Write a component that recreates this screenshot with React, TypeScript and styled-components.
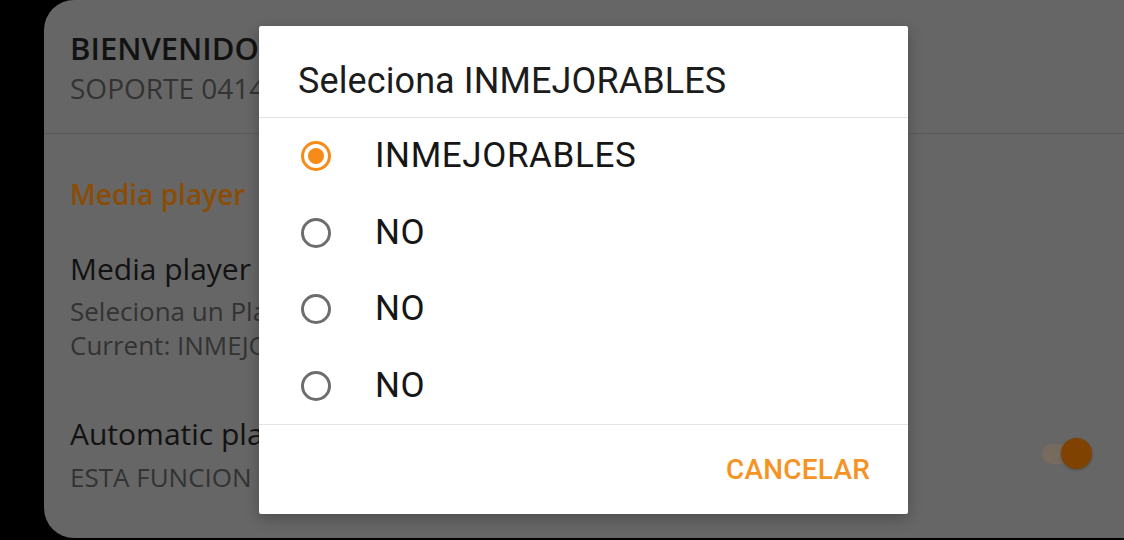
import React from "react";
import styled, { createGlobalStyle } from "styled-components";

const Global = createGlobalStyle`
  html, body { margin: 0; padding: 0; background: #000; }
  body { font-family: "Open Sans", "Noto Sans", sans-serif; }
`;

const Screen = styled.div`
  width: 1124px;
  height: 540px;
  display: flex;
  padding-left: 44px;
  box-sizing: border-box;
  overflow: hidden;
  position: relative;
`;

const Panel = styled.div`
  flex: 1;
  height: 538px;
  background: #666666;
  border-radius: 30px 0 0 30px;
  display: flex;
  flex-direction: column;
  overflow: hidden;
`;

const Header = styled.div`
  padding: 28px 32px 26px 26px;
  border-bottom: 1px solid #595959;
  display: flex;
  flex-direction: column;
`;

const Line = styled.div<{ $size: number; $lh: number; $color: string; $weight?: number; $mt?: number }>`
  font-family: "Open Sans", "Noto Sans", sans-serif;
  font-size: ${(p) => p.$size}px;
  line-height: ${(p) => p.$lh}px;
  color: ${(p) => p.$color};
  font-weight: ${(p) => p.$weight ?? 400};
  margin-top: ${(p) => p.$mt ?? 0}px;
  white-space: nowrap;
  overflow: hidden;
  max-width: 189px;
`;

const Category = styled.div`
  padding: 41px 26px 0 26px;
`;

const PrefRow = styled.div<{ $mt: number }>`
  display: flex;
  align-items: center;
  justify-content: space-between;
  padding: 0 32px 0 26px;
  margin-top: ${(p) => p.$mt}px;
`;

const PrefText = styled.div`
  display: flex;
  flex-direction: column;
`;

const Toggle = styled.div`
  position: relative;
  width: 50px;
  height: 32px;
  display: flex;
  align-items: center;
`;

const Track = styled.div`
  width: 44px;
  height: 20px;
  border-radius: 10px;
  background: #776a5e;
`;

const Thumb = styled.div`
  position: absolute;
  right: 0;
  top: 0;
  width: 31px;
  height: 31px;
  border-radius: 50%;
  background: #7f4200;
  box-shadow: 0 1px 3px rgba(0, 0, 0, 0.25);
`;

const Dialog = styled.div`
  position: absolute;
  top: 26px;
  left: 259px;
  width: 649px;
  height: 488px;
  background: #ffffff;
  border-radius: 2px;
  box-shadow: 0 4px 14px rgba(0, 0, 0, 0.25);
  display: flex;
  flex-direction: column;
  font-family: Roboto, "Noto Sans", sans-serif;
`;

const DialogTitle = styled.div`
  padding: 33px 39px 14px 39px;
  font-size: 36px;
  line-height: 44px;
  color: #1c1c1c;
  letter-spacing: 0.1px;
  border-bottom: 1px solid #e3e3e3;
`;

const Options = styled.div`
  display: flex;
  flex-direction: column;
  border-bottom: 1px solid #e3e3e3;
`;

const Option = styled.div`
  height: 76.5px;
  display: flex;
  align-items: center;
  padding-left: 42px;
  gap: 44px;
`;

const Radio = styled.div<{ $checked?: boolean }>`
  width: 30px;
  height: 30px;
  box-sizing: border-box;
  border-radius: 50%;
  border: 3px solid ${(p) => (p.$checked ? "#f78b17" : "#6d6d6d")};
  display: flex;
  align-items: center;
  justify-content: center;
  flex-shrink: 0;
  &::after {
    content: "";
    display: ${(p) => (p.$checked ? "block" : "none")};
    width: 16px;
    height: 16px;
    border-radius: 50%;
    background: #f78b17;
  }
`;

const OptionLabel = styled.span`
  font-size: 35px;
  line-height: 44px;
  font-weight: 400;
  letter-spacing: 0.6px;
  color: #161616;
`;

const Actions = styled.div`
  flex: 1;
  display: flex;
  align-items: center;
  justify-content: flex-end;
  padding-right: 38px;
`;

const ActionButton = styled.button`
  background: none;
  border: none;
  padding: 0;
  font-family: Roboto, "Noto Sans", sans-serif;
  font-size: 28px;
  font-weight: 500;
  color: #f59324;
  letter-spacing: 0.2px;
  cursor: pointer;
`;

const options = ["INMEJORABLES", "NO", "NO", "NO"];

export default function App() {
  return (
    <>
      <Global />
      <Screen>
        <Panel>
          <Header>
            <Line $size={31} $lh={40} $color="#121212" $weight={600}>
              BIENVENIDO A INMEJORABLES
            </Line>
            <Line $size={28} $lh={38} $color="#333333" $weight={500} $mt={1}>
              SOPORTE 04141234567
            </Line>
          </Header>
          <Category>
            <Line $size={28} $lh={38} $color="#8a4d08" $weight={600}>
              Media player
            </Line>
          </Category>
          <PrefRow $mt={36}>
            <PrefText>
              <Line $size={30} $lh={40} $color="#121212" $weight={500}>
                Media player
              </Line>
              <Line $size={26} $lh={34} $color="#333333" $weight={500} $mt={5}>
                Seleciona un Player
              </Line>
              <Line $size={26} $lh={34} $color="#333333" $weight={500}>
                Current: INMEJORABLES
              </Line>
            </PrefText>
          </PrefRow>
          <PrefRow $mt={52}>
            <PrefText>
              <Line $size={30} $lh={40} $color="#121212" $weight={500}>
                Automatic play
              </Line>
              <Line $size={26} $lh={34} $color="#333333" $weight={500} $mt={6}>
                ESTA FUNCION ESTA ACTIVA
              </Line>
            </PrefText>
            <Toggle>
              <Track />
              <Thumb />
            </Toggle>
          </PrefRow>
        </Panel>
        <Dialog>
          <DialogTitle>Seleciona INMEJORABLES</DialogTitle>
          <Options>
            {options.map((o, i) => (
              <Option key={i}>
                <Radio $checked={i === 0} />
                <OptionLabel>{o}</OptionLabel>
              </Option>
            ))}
          </Options>
          <Actions>
            <ActionButton>CANCELAR</ActionButton>
          </Actions>
        </Dialog>
      </Screen>
    </>
  );
}
